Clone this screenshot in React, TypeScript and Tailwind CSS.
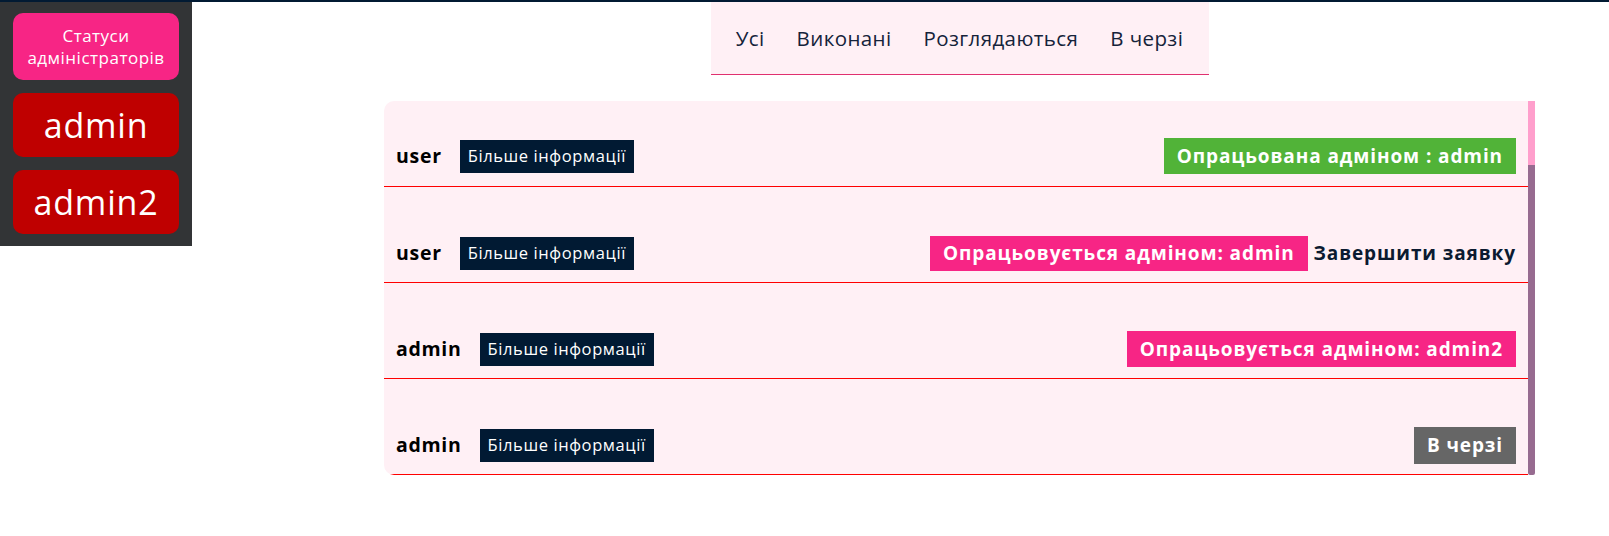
import React from "react";

const font = { fontFamily: '"Open Sans", "Noto Sans", sans-serif' };

type Row = {
  name: string;
  h: string;
  pb: string;
  status: React.ReactNode;
};

function MoreInfo() {
  return (
    <span className="bg-[#011a33] text-white text-[16.5px] leading-none h-[33px] px-[8px] flex items-center tracking-[0.6px]">
      Більше інформації
    </span>
  );
}

export default function App() {
  const rows: Row[] = [
    {
      name: "user",
      h: "h-[86px]",
      pb: "pb-[12px]",
      status: (
        <span className="bg-[#51b338] text-white font-bold text-[19px] h-[36px] px-[13px] flex items-center tracking-[0.9px]">
          Опрацьована адміном : admin
        </span>
      ),
    },
    {
      name: "user",
      h: "h-[96px]",
      pb: "pb-[11px]",
      status: (
        <div className="flex items-center">
          <span className="bg-[#f72585] text-white font-bold text-[19px] h-[35px] px-[13px] flex items-center tracking-[0.9px]">
            Опрацьовується адміном: admin
          </span>
          <span className="ml-[6px] text-[#0b1a30] font-bold text-[19px] tracking-[0.9px]">
            Завершити заявку
          </span>
        </div>
      ),
    },
    {
      name: "admin",
      h: "h-[96px]",
      pb: "pb-[11px]",
      status: (
        <span className="bg-[#f72585] text-white font-bold text-[19px] h-[36px] px-[13px] flex items-center tracking-[0.9px]">
          Опрацьовується адміном: admin2
        </span>
      ),
    },
    {
      name: "admin",
      h: "h-[96px]",
      pb: "pb-[11px]",
      status: (
        <span className="bg-[#666666] text-white font-bold text-[19px] h-[37px] px-[13px] flex items-center tracking-[0.9px]">
          В черзі
        </span>
      ),
    },
  ];

  return (
    <div style={font} className="w-[1609px] h-[536px] bg-white border-t-2 border-[#011a33] flex items-start">
      <aside className="w-[192px] h-[244px] bg-[#323436] flex flex-col px-[13px] pt-[11px] gap-[13px]">
        <div className="h-[67px] rounded-[10px] bg-[#f72585] text-white text-[17px] leading-[22px] tracking-[0.5px] flex flex-col items-center justify-center text-center">
          <span>Статуси</span>
          <span>адміністраторів</span>
        </div>
        <div className="h-[64px] rounded-[10px] bg-[#bf0000] text-white text-[34px] tracking-[0.8px] flex items-center justify-center">
          admin
        </div>
        <div className="h-[64px] rounded-[10px] bg-[#bf0000] text-white text-[34px] tracking-[0.8px] flex items-center justify-center">
          admin2
        </div>
      </aside>

      <main className="ml-[192px] w-[1151px] flex flex-col items-center">
        <nav className="w-[498px] h-[73px] bg-[#fff0f5] border-b border-[#e0306f] flex items-center justify-center gap-[32px] text-[20.5px] tracking-[0.4px] text-[#15233a]">
          <span>Усі</span>
          <span>Виконані</span>
          <span>Розглядаються</span>
          <span>В черзі</span>
        </nav>

        <div className="mt-[26px] w-full flex">
          <div className="flex-1 bg-[#fff0f5] rounded-l-[10px] overflow-hidden">
            {rows.map((r, i) => (
              <div
                key={i}
                className={`${r.h} ${r.pb} border-b border-[#ff0000] flex items-end pl-[12px] pr-[12px]`}
              >
                <div className="w-full h-[36px] flex items-center justify-between">
                  <div className="flex items-center gap-[18px]">
                    <span className="font-bold text-[19.5px] text-black tracking-[0.7px]">{r.name}</span>
                    <MoreInfo />
                  </div>
                  {r.status}
                </div>
              </div>
            ))}
          </div>
          <div className="w-[7px] flex flex-col">
            <div className="h-[64px] bg-[#ff9fcc]" />
            <div className="flex-1 bg-[#976b90] rounded-b-[2px]" />
          </div>
        </div>
      </main>
    </div>
  );
}
